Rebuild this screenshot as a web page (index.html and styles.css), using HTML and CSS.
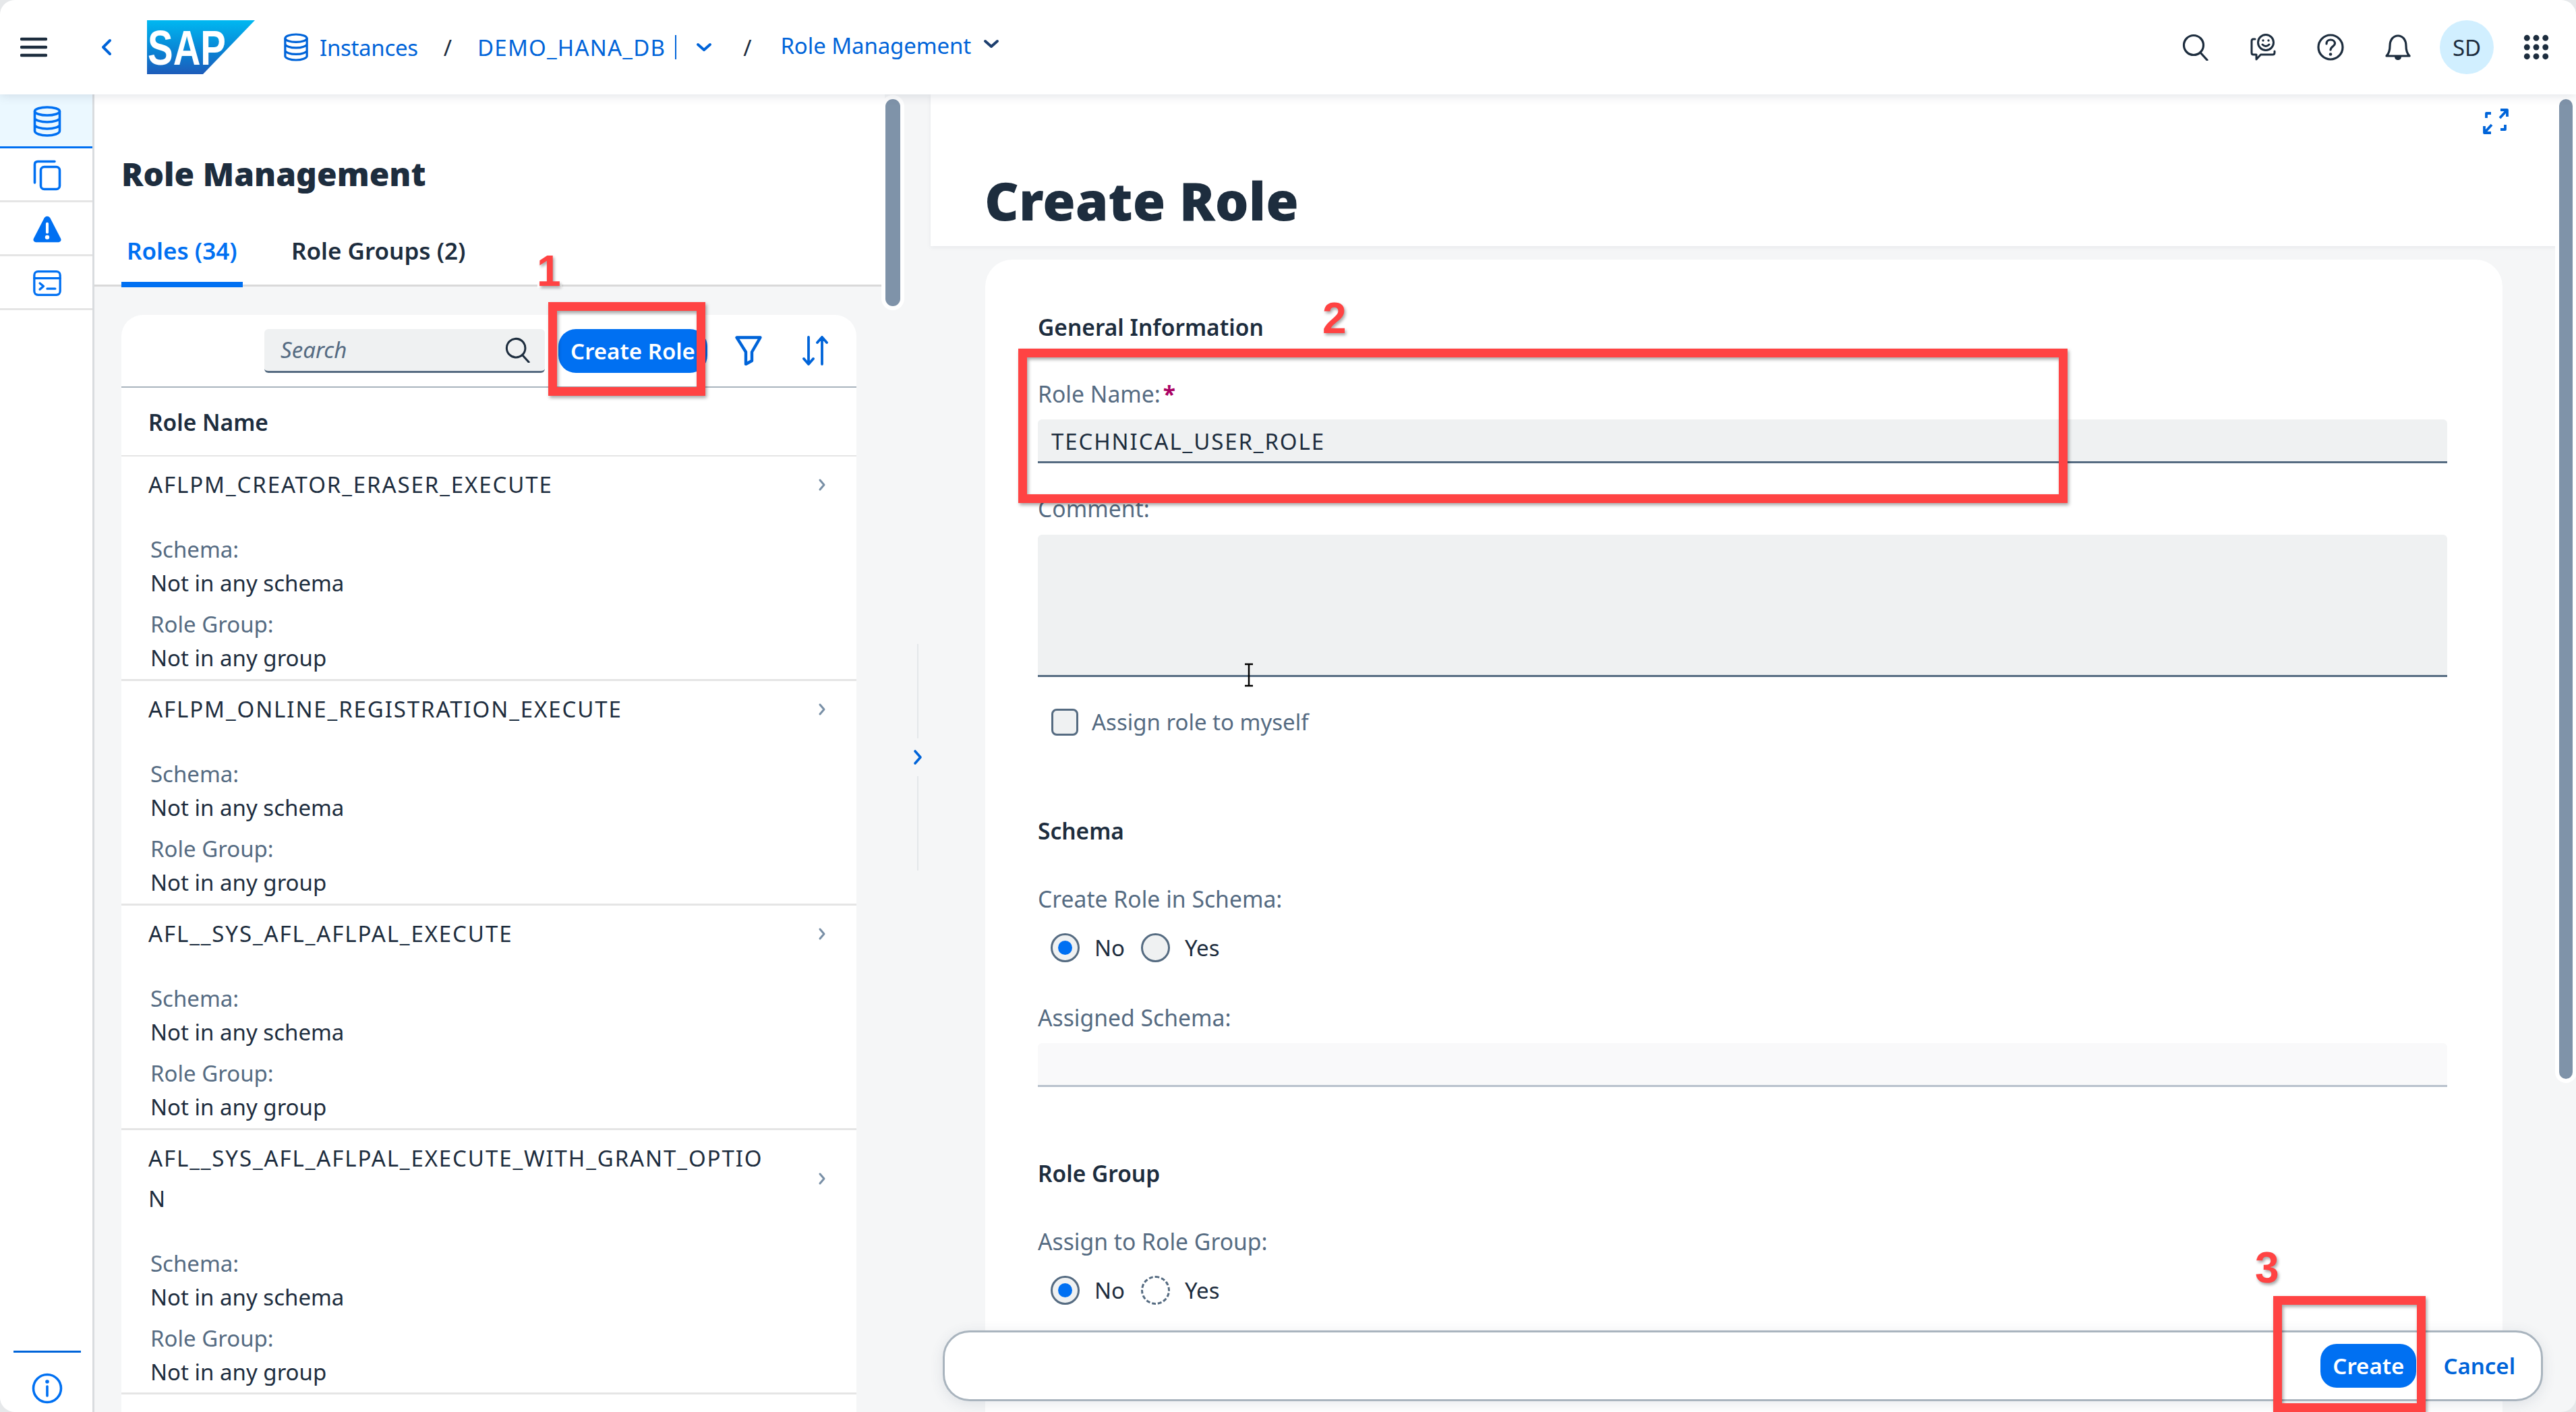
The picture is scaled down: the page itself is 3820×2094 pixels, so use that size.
FILE: index.html
```html
<!DOCTYPE html>
<html>
<head>
  <title>Role Management</title>
  <link rel="stylesheet" href="styles.css">
</head>
<body>
<div class="app">
  <header class="topbar">
    <svg class="ico hamburger" viewBox="0 0 40 30"><path d="M2 3H38M2 15H38M2 27H38" stroke="#1d2d3e" stroke-width="4.5" stroke-linecap="round"/></svg>
    <svg class="ico back" viewBox="0 0 16 26"><path d="M13 3L3 13L13 23" fill="none" stroke="#0064d9" stroke-width="4" stroke-linecap="round" stroke-linejoin="round"/></svg>
    <svg class="logo" viewBox="0 0 160 80">
      <defs><linearGradient id="sapfill" x1="0" y1="0" x2="0" y2="1"><stop offset="0" stop-color="#00b8f1"/><stop offset="0.6" stop-color="#0a80d2"/><stop offset="1" stop-color="#1e5cba"/></linearGradient></defs>
      <polygon points="0,0 160,0 83,80 0,80" fill="url(#sapfill)"/>
      <text x="1" y="66" class="logo-text" textLength="116" lengthAdjust="spacingAndGlyphs">SAP</text>
    </svg>
    <nav class="crumbs">
      <svg class="ico crumb-db" viewBox="0 0 40 44"><g fill="none" stroke="#0064d9" stroke-width="3.4"><ellipse cx="20" cy="8" rx="17" ry="6"/><path d="M3 8V36C3 39 11 42 20 42S37 39 37 36V8M3 17C3 20 11 23 20 23S37 20 37 17M3 27C3 30 11 33 20 33S37 30 37 27"/></g></svg>
      <a class="crumb crumb-first">Instances</a>
      <span class="sep">/</span>
      <a class="crumb crumb-db-name">DEMO_HANA_DB</a>
      <span class="bar"></span>
      <svg class="ico caret caret-db" viewBox="0 0 24 14"><path d="M3 3L12 11L21 3" fill="none" stroke="#0064d9" stroke-width="4" stroke-linecap="round" stroke-linejoin="round"/></svg>
      <span class="sep sep-two">/</span>
      <a class="crumb crumb-last">Role Management</a>
      <svg class="ico caret caret-role" viewBox="0 0 24 14"><path d="M3 3L12 11L21 3" fill="none" stroke="#1d3f6f" stroke-width="4" stroke-linecap="round" stroke-linejoin="round"/></svg>
    </nav>
    <div class="actions">
      <svg class="ico action" viewBox="0 0 40 40"><g fill="none" stroke="#1d2d3e" stroke-width="3.2" stroke-linecap="round"><circle cx="17" cy="17" r="14.5"/><path d="M27 28L37 39"/></g></svg>
      <svg class="ico action" viewBox="0 0 40 40"><g fill="none" stroke="#1d2d3e" stroke-width="3" stroke-linecap="round" stroke-linejoin="round"><circle cx="24" cy="13" r="11.5"/><path d="M8 8H5.500Q3 8 3 11V28Q3 31 5.500 31H10V38L16.500 31H34Q37 31 37 28V26"/><path d="M19 16Q24 21 29 16"/></g><circle cx="20" cy="10" r="1.700" fill="#1d2d3e"/><circle cx="28" cy="10" r="1.700" fill="#1d2d3e"/></svg>
      <svg class="ico action" viewBox="0 0 40 40"><circle cx="20" cy="20" r="18" fill="none" stroke="#1d2d3e" stroke-width="3.200"/><path d="M14 15C14 11 17 9 20 9C24 9 26.500 11.500 26.500 14.500C26.500 18.500 20 19 20 24" fill="none" stroke="#1d2d3e" stroke-width="3.200" stroke-linecap="round"/><circle cx="20" cy="30.500" r="2.300" fill="#1d2d3e"/></svg>
      <svg class="ico action" viewBox="0 0 40 40"><path d="M3 33C7 29 8 25 8 18C8 9 13 3 20 3S32 9 32 18C32 25 33 29 37 33Z" fill="none" stroke="#1d2d3e" stroke-width="3.200" stroke-linejoin="round"/><path d="M15 34H25C25 37 23 39 20 39S15 37 15 34Z" fill="#1d2d3e"/></svg>
      <div class="avatar">SD</div>
      <svg class="ico action grid-ico" viewBox="0 0 36 36" fill="#1d2d3e"><circle cx="5" cy="5" r="4.200"/><circle cx="18" cy="5" r="4.200"/><circle cx="31" cy="5" r="4.200"/><circle cx="5" cy="18" r="4.200"/><circle cx="18" cy="18" r="4.200"/><circle cx="31" cy="18" r="4.200"/><circle cx="5" cy="31" r="4.200"/><circle cx="18" cy="31" r="4.200"/><circle cx="31" cy="31" r="4.200"/></svg>
    </div>
  </header>

  <div class="main">
    <aside class="sidenav">
      <div class="nav-item nav-item-on">
        <svg class="ico nav-ico" viewBox="0 0 42 46"><g fill="none" stroke="#0070f2" stroke-width="3.600"><ellipse cx="21" cy="8" rx="18.500" ry="6"/><path d="M2.500 8V37C2.500 41 11 44 21 44S39.500 41 39.500 37V8M2.500 18C2.500 21 11 24 21 24S39.500 21 39.500 18M2.500 28C2.500 31 11 34 21 34S39.500 31 39.500 28"/></g></svg>
      </div>
      <div class="nav-item">
        <svg class="ico nav-ico" viewBox="0 0 42 46"><g fill="none" stroke="#0070f2" stroke-width="3.600" stroke-linecap="round"><path d="M2.500 34V7Q2.500 2.500 7 2.500H32"/><rect x="11.500" y="10.500" width="28" height="33" rx="5"/></g></svg>
      </div>
      <div class="nav-item">
        <svg class="ico nav-ico" viewBox="0 0 46 44"><path d="M23 1C26 1 27.500 3 28.500 5L45 37C46.500 40 44.500 43 41.500 43H4.500C1.500 43 -0.500 40 1 37L17.500 5C18.500 3 20 1 23 1Z" fill="#0070f2"/><path d="M23 13V27" stroke="#fff" stroke-width="4.500" stroke-linecap="round"/><circle cx="23" cy="35" r="3.500" fill="#fff"/></svg>
      </div>
      <div class="nav-item">
        <svg class="ico nav-ico" viewBox="0 0 46 42"><g fill="none" stroke="#0070f2" stroke-width="3.600" stroke-linecap="round" stroke-linejoin="round"><rect x="2" y="2" width="42" height="38" rx="6"/><path d="M2 13H44M11 21L17 26L11 31M23 30H36"/></g></svg>
      </div>
      <div class="nav-foot">
        <div class="nav-rule"></div>
        <svg class="ico info-ico" viewBox="0 0 46 46"><circle cx="23" cy="23" r="20.500" fill="none" stroke="#0070f2" stroke-width="3.600"/><circle cx="23" cy="13" r="2.800" fill="#0070f2"/><path d="M23 20V34" stroke="#0070f2" stroke-width="3.600" stroke-linecap="round"/></svg>
      </div>
    </aside>

    <section class="left-panel">
      <div class="panel-head">
        <h2 class="panel-title">Role Management</h2>
        <div class="tabs">
          <div class="tab tab-on">Roles (34)</div>
          <div class="tab">Role Groups (2)</div>
        </div>
      </div>
      <div class="panel-body">
        <div class="list-card">
          <div class="toolbar">
            <div class="search">
              <span class="search-hint">Search</span>
              <svg class="ico search-ico" viewBox="0 0 40 40"><g fill="none" stroke="#1d2d3e" stroke-width="3.200" stroke-linecap="round"><circle cx="17" cy="17" r="14.500"/><path d="M27 28L37 39"/></g></svg>
            </div>
            <button class="btn btn-role">Create Role</button>
            <svg class="ico tool-filter" viewBox="0 0 40 44"><path d="M2.500 2.500H37.500L25 24V37L16 42V24Z" fill="none" stroke="#0064d9" stroke-width="4.400" stroke-linejoin="round"/></svg>
            <svg class="ico tool-sort" viewBox="0 0 38 46"><g fill="none" stroke="#0064d9" stroke-width="3.800" stroke-linecap="round" stroke-linejoin="round"><path d="M9 3V43M2 35L9 43L16 35M29 43V3M22 11L29 3L36 11"/></g></svg>
          </div>
          <div class="list-head">Role Name</div>

          <div class="role-row">
            <div class="role-top"><span class="role-name">AFLPM_CREATOR_ERASER_EXECUTE</span><svg class="ico chev" viewBox="0 0 12 20"><path d="M3 3L9 10L3 17" fill="none" stroke="#788fa6" stroke-width="3" stroke-linecap="round" stroke-linejoin="round"/></svg></div>
            <div class="role-label">Schema:</div><div class="role-val">Not in any schema</div>
            <div class="role-label role-label-2">Role Group:</div><div class="role-val">Not in any group</div>
          </div>
          <div class="role-row">
            <div class="role-top"><span class="role-name">AFLPM_ONLINE_REGISTRATION_EXECUTE</span><svg class="ico chev" viewBox="0 0 12 20"><path d="M3 3L9 10L3 17" fill="none" stroke="#788fa6" stroke-width="3" stroke-linecap="round" stroke-linejoin="round"/></svg></div>
            <div class="role-label">Schema:</div><div class="role-val">Not in any schema</div>
            <div class="role-label role-label-2">Role Group:</div><div class="role-val">Not in any group</div>
          </div>
          <div class="role-row">
            <div class="role-top"><span class="role-name">AFL__SYS_AFL_AFLPAL_EXECUTE</span><svg class="ico chev" viewBox="0 0 12 20"><path d="M3 3L9 10L3 17" fill="none" stroke="#788fa6" stroke-width="3" stroke-linecap="round" stroke-linejoin="round"/></svg></div>
            <div class="role-label">Schema:</div><div class="role-val">Not in any schema</div>
            <div class="role-label role-label-2">Role Group:</div><div class="role-val">Not in any group</div>
          </div>
          <div class="role-row">
            <div class="role-top"><span class="role-name">AFL__SYS_AFL_AFLPAL_EXECUTE_WITH_GRANT_OPTIO<br>N</span><svg class="ico chev" viewBox="0 0 12 20"><path d="M3 3L9 10L3 17" fill="none" stroke="#788fa6" stroke-width="3" stroke-linecap="round" stroke-linejoin="round"/></svg></div>
            <div class="role-label">Schema:</div><div class="role-val">Not in any schema</div>
            <div class="role-label role-label-2">Role Group:</div><div class="role-val">Not in any group</div>
          </div>
        </div>
      </div>
      <div class="splitter"><span class="split-line"></span><svg class="ico split-chev" viewBox="0 0 14 24"><path d="M3 3L11 12L3 21" fill="none" stroke="#0064d9" stroke-width="3.600" stroke-linecap="round" stroke-linejoin="round"/></svg><span class="split-line"></span></div>
      <div class="scroll-thumb thumb-left"></div>
    </section>

    <section class="right-panel">
      <div class="detail-head">
        <svg class="ico expand" viewBox="0 0 40 40"><g fill="none" stroke="#0064d9" stroke-width="3.800" stroke-linejoin="round"><path d="M6 15V8H13M34 25V32H27"/><path d="M26 15L37 3M27 3H37V13M14 25L3 37M13 37H3V27"/></g></svg>
        <h1 class="detail-title">Create Role</h1>
      </div>
      <div class="form-card">
        <h3 class="form-title">General Information</h3>
        <label class="field-label label-name">Role Name:<span class="req">*</span></label>
        <div class="input input-name">TECHNICAL_USER_ROLE</div>
        <label class="field-label label-comment">Comment:</label>
        <div class="input textarea"></div>
        <div class="check-line"><span class="checkbox"></span><span class="check-text">Assign role to myself</span></div>

        <h3 class="form-title title-schema">Schema</h3>
        <label class="field-label label-radio">Create Role in Schema:</label>
        <div class="radios">
          <span class="radio radio-on"></span><span class="radio-text">No</span>
          <span class="radio"></span><span class="radio-text">Yes</span>
        </div>
        <label class="field-label label-assigned">Assigned Schema:</label>
        <div class="input input-off"></div>

        <h3 class="form-title title-group">Role Group</h3>
        <label class="field-label label-radio">Assign to Role Group:</label>
        <div class="radios">
          <span class="radio radio-on"></span><span class="radio-text">No</span>
          <span class="radio radio-dashed"></span><span class="radio-text">Yes</span>
        </div>
      </div>
      <div class="scroll-thumb thumb-right"></div>
    </section>
  </div>

  <footer class="footer-bar">
    <button class="btn btn-create">Create</button>
    <a class="cancel">Cancel</a>
  </footer>

  <!-- annotations drawn on top of the screenshot -->
  <div class="mark mark-1"></div>
  <div class="mark mark-2"></div>
  <div class="mark mark-3"></div>
  <span class="step step-1">1</span>
  <span class="step step-2">2</span>
  <span class="step step-3">3</span>
  <svg class="ibeam" viewBox="0 0 20 36"><path d="M4 2H16M10 2V34M4 34H16" fill="none" stroke="#000" stroke-width="2.500"/></svg>
</div>
</body>
</html>
```
FILE: styles.css
```css
* {
  box-sizing: border-box;
}

html, body {
  margin: 0;
  height: 100%;
  background: #e6e8ea;
}

body {
  font-family: "Noto Sans", Arial, sans-serif;
  font-size: 33px;
  color: #1d2d3e;
}

.ico {
  display: block;
  flex: none;
}

.app {
  position: relative;
  width: 3820px;
  height: 2094px;
  overflow: hidden;
  border-radius: 22px;
  background: #f5f6f7;
}

/* top bar */
.topbar {
  position: relative;
  z-index: 3;
  display: flex;
  align-items: center;
  height: 140px;
  background: #fff;
  box-shadow: 0 2px 14px rgba(60, 75, 100, 0.16);
}

.hamburger {
  width: 40px;
  height: 30px;
  margin-left: 30px;
}

.back {
  width: 16px;
  height: 26px;
  margin-left: 80px;
}

.logo {
  display: block;
  width: 160px;
  height: 80px;
  margin-left: 52px;
}

.logo-text {
  font-family: "Liberation Sans", Arial, sans-serif;
  font-size: 72px;
  font-weight: 700;
  fill: #fff;
}

.crumbs {
  display: flex;
  align-items: center;
  margin-left: 42px;
  color: #0064d9;
  font-size: 33px;
}

.crumb-db {
  width: 38px;
  height: 42px;
}

.crumb-first {
  margin-left: 16px;
  letter-spacing: -0.3px;
}

.crumb-db-name {
  letter-spacing: 1.2px;
}

.sep {
  margin: 0 38px;
  color: #1d2d3e;
  font-weight: 400;
}

.bar {
  width: 2px;
  height: 36px;
  margin-left: 14px;
  background: #0064d9;
}

.caret {
  width: 24px;
  height: 14px;
}

.caret-db {
  margin-left: 29px;
}

.sep-two {
  margin-left: 46px;
  margin-right: 43px;
}

.crumb-last {
  position: relative;
  top: -3px;
  letter-spacing: -0.1px;
}

.caret-role {
  margin-left: 18px;
  position: relative;
  top: -5px;
}

.actions {
  display: flex;
  align-items: center;
  margin-left: auto;
  padding-right: 40px;
}

.action {
  width: 40px;
  height: 40px;
  margin-left: 60px;
}

.avatar {
  display: flex;
  align-items: center;
  justify-content: center;
  width: 80px;
  height: 80px;
  margin-left: 42px;
  border-radius: 50%;
  background: #d1efff;
  font-size: 33px;
}

.action.grid-ico {
  width: 38px;
  height: 38px;
  margin-left: 44px;
}

/* page body */
.main {
  display: flex;
  height: 1954px;
}

.sidenav {
  position: relative;
  flex: none;
  display: flex;
  flex-direction: column;
  width: 140px;
  background: #fff;
  border-right: 3px solid #d9dcdf;
}

.nav-item {
  display: flex;
  align-items: center;
  justify-content: center;
  height: 80px;
  padding: 2px 0 0 3px;
  border-bottom: 3px solid #e5e5e5;
}

.nav-item-on {
  background: #ebf8ff;
  border-bottom: 3px solid #0070f2;
}

.nav-ico {
  width: 42px;
  height: 46px;
}

.nav-foot {
  display: flex;
  flex-direction: column;
  align-items: center;
  margin-top: auto;
  padding: 0 0 12px 3px;
}

.nav-rule {
  width: 100px;
  height: 3px;
  margin-bottom: 30px;
  background: #0064d9;
}

.info-ico {
  width: 46px;
  height: 46px;
}

/* left panel */
.left-panel {
  position: relative;
  flex: none;
  width: 1240px;
}

.panel-head {
  width: 1172px;
  height: 285px;
  padding: 85px 0 0 40px;
  background: #fff;
  border-bottom: 3px solid #d9d9d9;
}

.panel-title {
  margin: 0;
  font-size: 48px;
  line-height: 66px;
  font-weight: 900;
}

.tabs {
  display: flex;
  gap: 72px;
  margin-top: 58px;
}

.tab {
  height: 77px;
  font-size: 35px;
  font-weight: 600;
  line-height: 46px;
}

.tab-on {
  width: 180px;
  padding: 0 8px;
  color: #0070f2;
  border-bottom: 8px solid #0070f2;
  white-space: nowrap;
}

.panel-body {
  height: 1669px;
  padding: 42px 0 0 40px;
}

.list-card {
  width: 1090px;
  height: 1700px;
  border-radius: 32px 32px 0 0;
  background: #fff;
}

.toolbar {
  display: flex;
  align-items: center;
  height: 108px;
  padding-left: 212px;
  border-bottom: 2px solid #a9b4be;
}

.search {
  display: flex;
  align-items: center;
  justify-content: space-between;
  width: 416px;
  height: 65px;
  padding: 0 21px 0 24px;
  background: #eff1f2;
  border-bottom: 3px solid #556b81;
  border-radius: 6px;
}

.search-hint {
  color: #556b82;
  font-style: italic;
}

.search-ico {
  width: 38px;
  height: 38px;
}

.btn {
  border: 0;
  color: #fff;
  background: #0070f2;
  font-family: inherit;
  font-size: 33px;
  font-weight: 600;
  padding: 0;
}

.btn-role {
  width: 221px;
  height: 65px;
  margin-left: 20px;
  border-radius: 26px;
}

.tool-filter {
  width: 40px;
  height: 44px;
  margin-left: 41px;
}

.tool-sort {
  width: 38px;
  height: 46px;
  margin-left: 60px;
}

.list-head {
  height: 102px;
  padding: 0 40px;
  font-size: 33.500px;
  font-weight: 600;
  line-height: 102px;
  border-bottom: 2px solid #e5e5e5;
}

.role-row {
  height: 333px;
  padding: 12px 40px 0;
  border-bottom: 3px solid #e5e5e5;
}

.role-row:last-child {
  height: 392px;
}

.role-top {
  display: flex;
  align-items: center;
  justify-content: space-between;
  margin-bottom: 41px;
  line-height: 60px;
}

.role-name {
  letter-spacing: 1.900px;
}

.chev {
  width: 12px;
  height: 20px;
  margin-right: 5px;
}

.role-label {
  padding-left: 3px;
  color: #556b82;
  line-height: 50px;
}

.role-label-2 {
  margin-top: 11px;
}

.role-val {
  padding-left: 3px;
  line-height: 50px;
}

.splitter {
  position: absolute;
  top: 815px;
  left: 1214px;
  display: flex;
  flex-direction: column;
  align-items: center;
  gap: 16px;
}

.split-line {
  width: 2px;
  height: 140px;
  background: #e4e7ea;
}

.split-chev {
  width: 14px;
  height: 24px;
}

.scroll-thumb {
  position: absolute;
  width: 22px;
  border-radius: 11px;
  background: #7f93a9;
  box-shadow: 0 0 0 6px #fff;
}

.thumb-left {
  top: 7px;
  left: 1173px;
  height: 307px;
}

/* right panel */
.right-panel {
  position: relative;
  flex: 1;
}

.detail-head {
  position: relative;
  height: 225px;
  padding: 107px 0 0 80px;
  background: #fff;
  box-shadow: 0 2px 6px rgba(60, 75, 100, 0.08);
}

.expand {
  position: absolute;
  top: 20px;
  right: 99px;
  width: 40px;
  height: 40px;
}

.detail-title {
  margin: 0;
  font-size: 78.500px;
  line-height: 100px;
  font-weight: 900;
}

.form-card {
  width: 2250px;
  height: 1800px;
  margin: 20px 0 0 81px;
  padding: 75px 78px 0;
  background: #fff;
  border-radius: 40px 40px 0 0;
}

.form-title {
  margin: 0;
  font-size: 33.500px;
  font-weight: 600;
  line-height: 50px;
}

.field-label {
  display: block;
  color: #556b82;
  font-size: 33.700px;
  line-height: 50px;
}

.label-name {
  margin-top: 49px;
}

.req {
  margin-left: 4px;
  color: #aa0063;
  font-weight: 700;
}

.input {
  width: 2090px;
  height: 65px;
  margin-top: 13px;
  padding-left: 20px;
  background: #eff1f2;
  border-bottom: 3px solid #556b81;
  border-radius: 6px 6px 0 0;
  line-height: 60px;
}

.input-name {
  letter-spacing: 1.900px;
  line-height: 65px;
}

.label-comment {
  margin-top: 42px;
}

.textarea {
  height: 211px;
  margin-top: 14px;
}

.input-off {
  margin-top: 13px;
  background: #f9f9fa;
  border-bottom-color: #b8c1cc;
}

.check-line {
  display: flex;
  align-items: center;
  margin: 44px 0 0 20px;
}

.checkbox {
  width: 40px;
  height: 40px;
  background: #eff1f2;
  border: 3px solid #556b81;
  border-radius: 8px;
}

.check-text {
  margin-left: 20px;
  color: #556b82;
}

.title-schema {
  margin-top: 114px;
}

.label-radio {
  margin-top: 51px;
}

.radios {
  display: flex;
  align-items: center;
  height: 44px;
  margin: 25px 0 0 19px;
}

.radio {
  position: relative;
  width: 43px;
  height: 43px;
  background: #eff1f2;
  border: 3px solid #556b81;
  border-radius: 50%;
}

.radio-on::after {
  content: "";
  position: absolute;
  top: 8px;
  left: 8px;
  width: 21px;
  height: 21px;
  border-radius: 50%;
  background: #0070f2;
}

.radio-dashed {
  background: #fff;
  border-style: dashed;
}

.radio-text {
  margin: 0 24px 0 22px;
}

.label-assigned {
  margin-top: 57px;
}

.title-group {
  margin-top: 103px;
}

.thumb-right {
  top: 7px;
  left: 2415px;
  width: 20px;
  height: 1453px;
}

/* floating action bar */
.footer-bar {
  position: absolute;
  left: 1398px;
  top: 1973px;
  display: flex;
  align-items: center;
  justify-content: flex-end;
  width: 2373px;
  height: 105px;
  padding-right: 38px;
  background: #fff;
  border: 3px solid #a9b4be;
  border-radius: 40px;
  box-shadow: 0 4px 20px rgba(60, 75, 100, 0.12);
}

.btn-create {
  width: 142px;
  height: 65px;
  border-radius: 24px;
}

.cancel {
  margin-left: 40px;
  color: #0064d9;
  font-weight: 600;
}

/* red annotation boxes and numbers */
.mark {
  position: absolute;
  border: 13px solid #ff4343;
  box-shadow: 2px 3px 5px rgba(0, 0, 0, 0.35), inset 2px 3px 5px rgba(0, 0, 0, 0.35);
}

.mark-1 {
  left: 813px;
  top: 448px;
  width: 233px;
  height: 139px;
}

.mark-2 {
  left: 1510px;
  top: 517px;
  width: 1556px;
  height: 229px;
}

.mark-3 {
  left: 3371px;
  top: 1922px;
  width: 226px;
  height: 172px;
}

.step {
  position: absolute;
  font-family: "Liberation Sans", Arial, sans-serif;
  font-size: 64px;
  font-weight: 700;
  line-height: 64px;
  color: #ff4343;
  -webkit-text-stroke: 6px #fff;
  paint-order: stroke fill;
  text-shadow: 2px 3px 4px rgba(0, 0, 0, 0.35);
}

.step-1 {
  left: 796px;
  top: 370px;
}

.step-2 {
  left: 1961px;
  top: 440px;
}

.step-3 {
  left: 3344px;
  top: 1848px;
}

.ibeam {
  position: absolute;
  left: 1842px;
  top: 983px;
  width: 20px;
  height: 36px;
}
```
